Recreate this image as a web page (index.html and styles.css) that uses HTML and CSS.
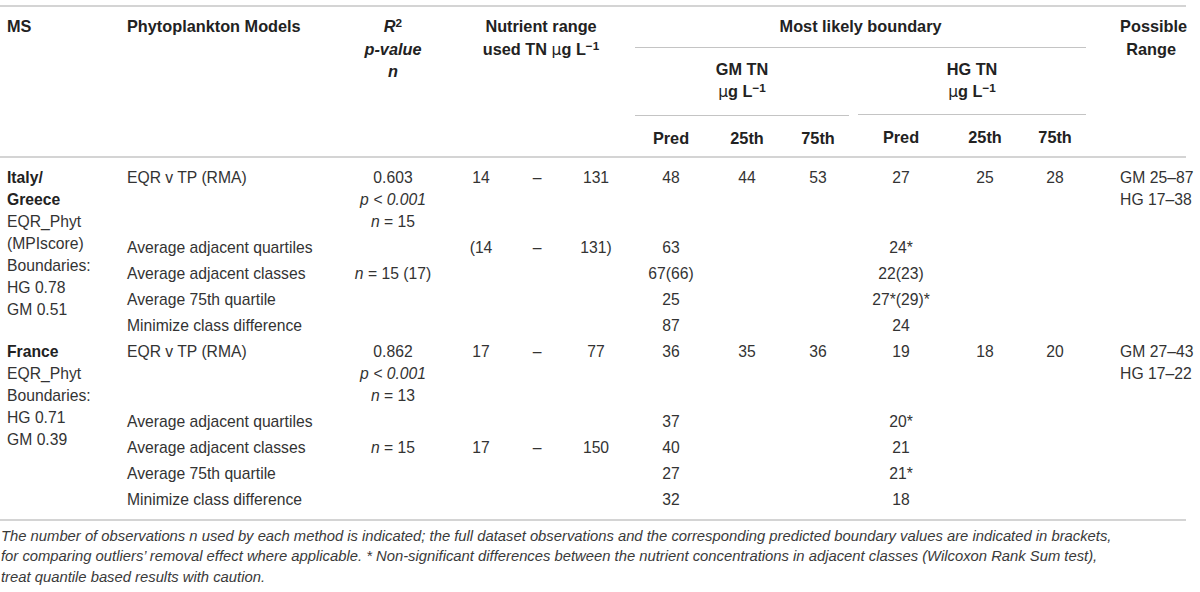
FILE: index.html
```html
<!DOCTYPE html>
<html lang="en">
<head>
<meta charset="utf-8">
<title>Phytoplankton models table</title>
<link rel="stylesheet" href="styles.css">
</head>
<body>
<div class="page">
<table class="data">
  <colgroup>
    <col class="c-ms"><col class="c-model"><col class="c-r2">
    <col class="c-lo"><col class="c-dash"><col class="c-hi">
    <col class="c-gp"><col class="c-g25"><col class="c-g75">
    <col class="c-hp"><col class="c-h25"><col class="c-h75">
    <col class="c-range">
  </colgroup>
  <thead>
    <tr>
      <th rowspan="3" class="left">MS</th>
      <th rowspan="3" class="left">Phytoplankton Models</th>
      <th rowspan="3"><i>R</i><sup>2</sup><br><i>p-value</i><br><i>n</i></th>
      <th rowspan="3" colspan="3" class="nutr">Nutrient range<br>used TN <span class="mu">µ</span>g L<sup>−1</sup></th>
      <th colspan="6" class="boundary">Most likely boundary</th>
      <th rowspan="3" class="range">Possible<br>Range</th>
    </tr>
    <tr>
      <th colspan="3" class="grp gm">GM TN<br><span class="mu">µ</span>g L<sup>−1</sup></th>
      <th colspan="3" class="grp hg">HG TN<br><span class="mu">µ</span>g L<sup>−1</sup></th>
    </tr>
    <tr class="sub">
      <th>Pred</th><th>25th</th><th>75th</th>
      <th>Pred</th><th>25th</th><th class="h75">75th</th>
    </tr>
  </thead>
  <tbody>
    <tr class="first">
      <td rowspan="5" class="left ms"><b>Italy/<br>Greece</b><br>EQR_Phyt<br>(MPIscore)<br>Boundaries:<br>HG 0.78<br>GM 0.51</td>
      <td class="left">EQR v TP (RMA)</td>
      <td>0.603<br><i>p &lt; 0.001</i><br><i>n</i> = 15</td>
      <td>14</td><td>–</td><td class="hi">131</td>
      <td>48</td><td>44</td><td>53</td>
      <td>27</td><td>25</td><td class="h75">28</td>
      <td class="range">GM 25–87<br>HG 17–38</td>
    </tr>
    <tr>
      <td class="left">Average adjacent quartiles</td>
      <td></td>
      <td>(14</td><td>–</td><td class="hi">131)</td>
      <td>63</td><td></td><td></td>
      <td>24*</td><td></td><td></td>
      <td></td>
    </tr>
    <tr>
      <td class="left">Average adjacent classes</td>
      <td><i>n</i> = 15 (17)</td>
      <td></td><td></td><td></td>
      <td>67(66)</td><td></td><td></td>
      <td>22(23)</td><td></td><td></td>
      <td></td>
    </tr>
    <tr>
      <td class="left">Average 75th quartile</td>
      <td></td>
      <td></td><td></td><td></td>
      <td>25</td><td></td><td></td>
      <td>27*(29)*</td><td></td><td></td>
      <td></td>
    </tr>
    <tr>
      <td class="left">Minimize class difference</td>
      <td></td>
      <td></td><td></td><td></td>
      <td>87</td><td></td><td></td>
      <td>24</td><td></td><td></td>
      <td></td>
    </tr>
    <tr>
      <td rowspan="5" class="left ms"><b>France</b><br>EQR_Phyt<br>Boundaries:<br>HG 0.71<br>GM 0.39</td>
      <td class="left">EQR v TP (RMA)</td>
      <td>0.862<br><i>p &lt; 0.001</i><br><i>n</i> = 13</td>
      <td>17</td><td>–</td><td class="hi">77</td>
      <td>36</td><td>35</td><td>36</td>
      <td>19</td><td>18</td><td class="h75">20</td>
      <td class="range">GM 27–43<br>HG 17–22</td>
    </tr>
    <tr>
      <td class="left">Average adjacent quartiles</td>
      <td></td>
      <td></td><td></td><td></td>
      <td>37</td><td></td><td></td>
      <td>20*</td><td></td><td></td>
      <td></td>
    </tr>
    <tr>
      <td class="left">Average adjacent classes</td>
      <td><i>n</i> = 15</td>
      <td>17</td><td>–</td><td class="hi">150</td>
      <td>40</td><td></td><td></td>
      <td>21</td><td></td><td></td>
      <td></td>
    </tr>
    <tr>
      <td class="left">Average 75th quartile</td>
      <td></td>
      <td></td><td></td><td></td>
      <td>27</td><td></td><td></td>
      <td>21*</td><td></td><td></td>
      <td></td>
    </tr>
    <tr class="last">
      <td class="left">Minimize class difference</td>
      <td></td>
      <td></td><td></td><td></td>
      <td>32</td><td></td><td></td>
      <td>18</td><td></td><td></td>
      <td></td>
    </tr>
  </tbody>
</table>
<p class="caption">The number of observations n used by each method is indicated; the full dataset observations and the corresponding predicted boundary values are indicated in brackets,<br>for comparing outliers’ removal effect where applicable. * Non-significant differences between the nutrient concentrations in adjacent classes (Wilcoxon Rank Sum test),<br>treat quantile based results with caution.</p>
</div>
</body>
</html>
```

FILE: styles.css
```css
html, body {
  margin: 0;
  padding: 0;
  background: #ffffff;
}

body {
  font-family: "Liberation Sans", Arial, sans-serif;
  color: #333333;
}

.page {
  width: 1200px;
  padding-top: 5px;
}

.data {
  border-collapse: collapse;
  table-layout: fixed;
  width: 1186px;
}

.c-ms { width: 120px; }
.c-model { width: 230px; }
.c-r2 { width: 86px; }
.c-lo { width: 90px; }
.c-dash { width: 22px; }
.c-hi { width: 87px; }
.c-gp { width: 72px; }
.c-g25 { width: 80px; }
.c-g75 { width: 62px; }
.c-hp { width: 104px; }
.c-h25 { width: 64px; }
.c-h75 { width: 69px; }
.c-range { width: 100px; }

thead {
  border-top: 2px solid #d4d4d4;
  border-bottom: 2px solid #d4d4d4;
}

th {
  font-size: 16.3px;
  font-weight: bold;
  line-height: 22.5px;
  color: #222222;
  text-align: center;
  vertical-align: top;
  padding: 8px 4px 9px;
  white-space: nowrap;
}

th.left,
td.left {
  text-align: left;
  padding-left: 7px;
}

th sup,
td sup {
  font-size: 0.72em;
  line-height: 0;
  vertical-align: 0.45em;
}

.mu {
  font-weight: normal;
  font-family: "DejaVu Sans", "Liberation Sans", sans-serif;
  font-size: 0.95em;
}

th.nutr {
  padding-left: 15px;
}

th.boundary {
  border-bottom: 1px solid #c4c4c4;
}

th.grp {
  padding-top: 10px;
  padding-bottom: 11px;
}

th.gm {
  border-bottom: 1px solid #c4c4c4;
}

th.hg {
  padding-left: 13px;
  background-image: linear-gradient(#c4c4c4, #c4c4c4);
  background-repeat: no-repeat;
  background-position: right bottom;
  background-size: calc(100% - 9px) 1px;
}

tr.sub th {
  padding-top: 11px;
  padding-bottom: 7px;
}

th.h75,
td.h75 {
  padding-left: 11px;
}

th.range,
td.range {
  padding-left: 34px;
  padding-right: 4px;
}

tbody {
  border-bottom: 2px solid #d4d4d4;
}

td {
  font-size: 15.7px;
  line-height: 22px;
  text-align: center;
  vertical-align: top;
  padding: 2px 4px;
  white-space: nowrap;
}

td.hi {
  padding-left: 13px;
}

td.ms b {
  color: #222222;
}

tr.first td {
  padding-top: 8.5px;
}

tr.last td {
  padding-bottom: 8px;
}

.caption {
  margin: 5px 0 0;
  padding-left: 1px;
  font-size: 14.8px;
  line-height: 20.5px;
  font-style: italic;
  color: #3a3a3a;
  white-space: nowrap;
}
```
